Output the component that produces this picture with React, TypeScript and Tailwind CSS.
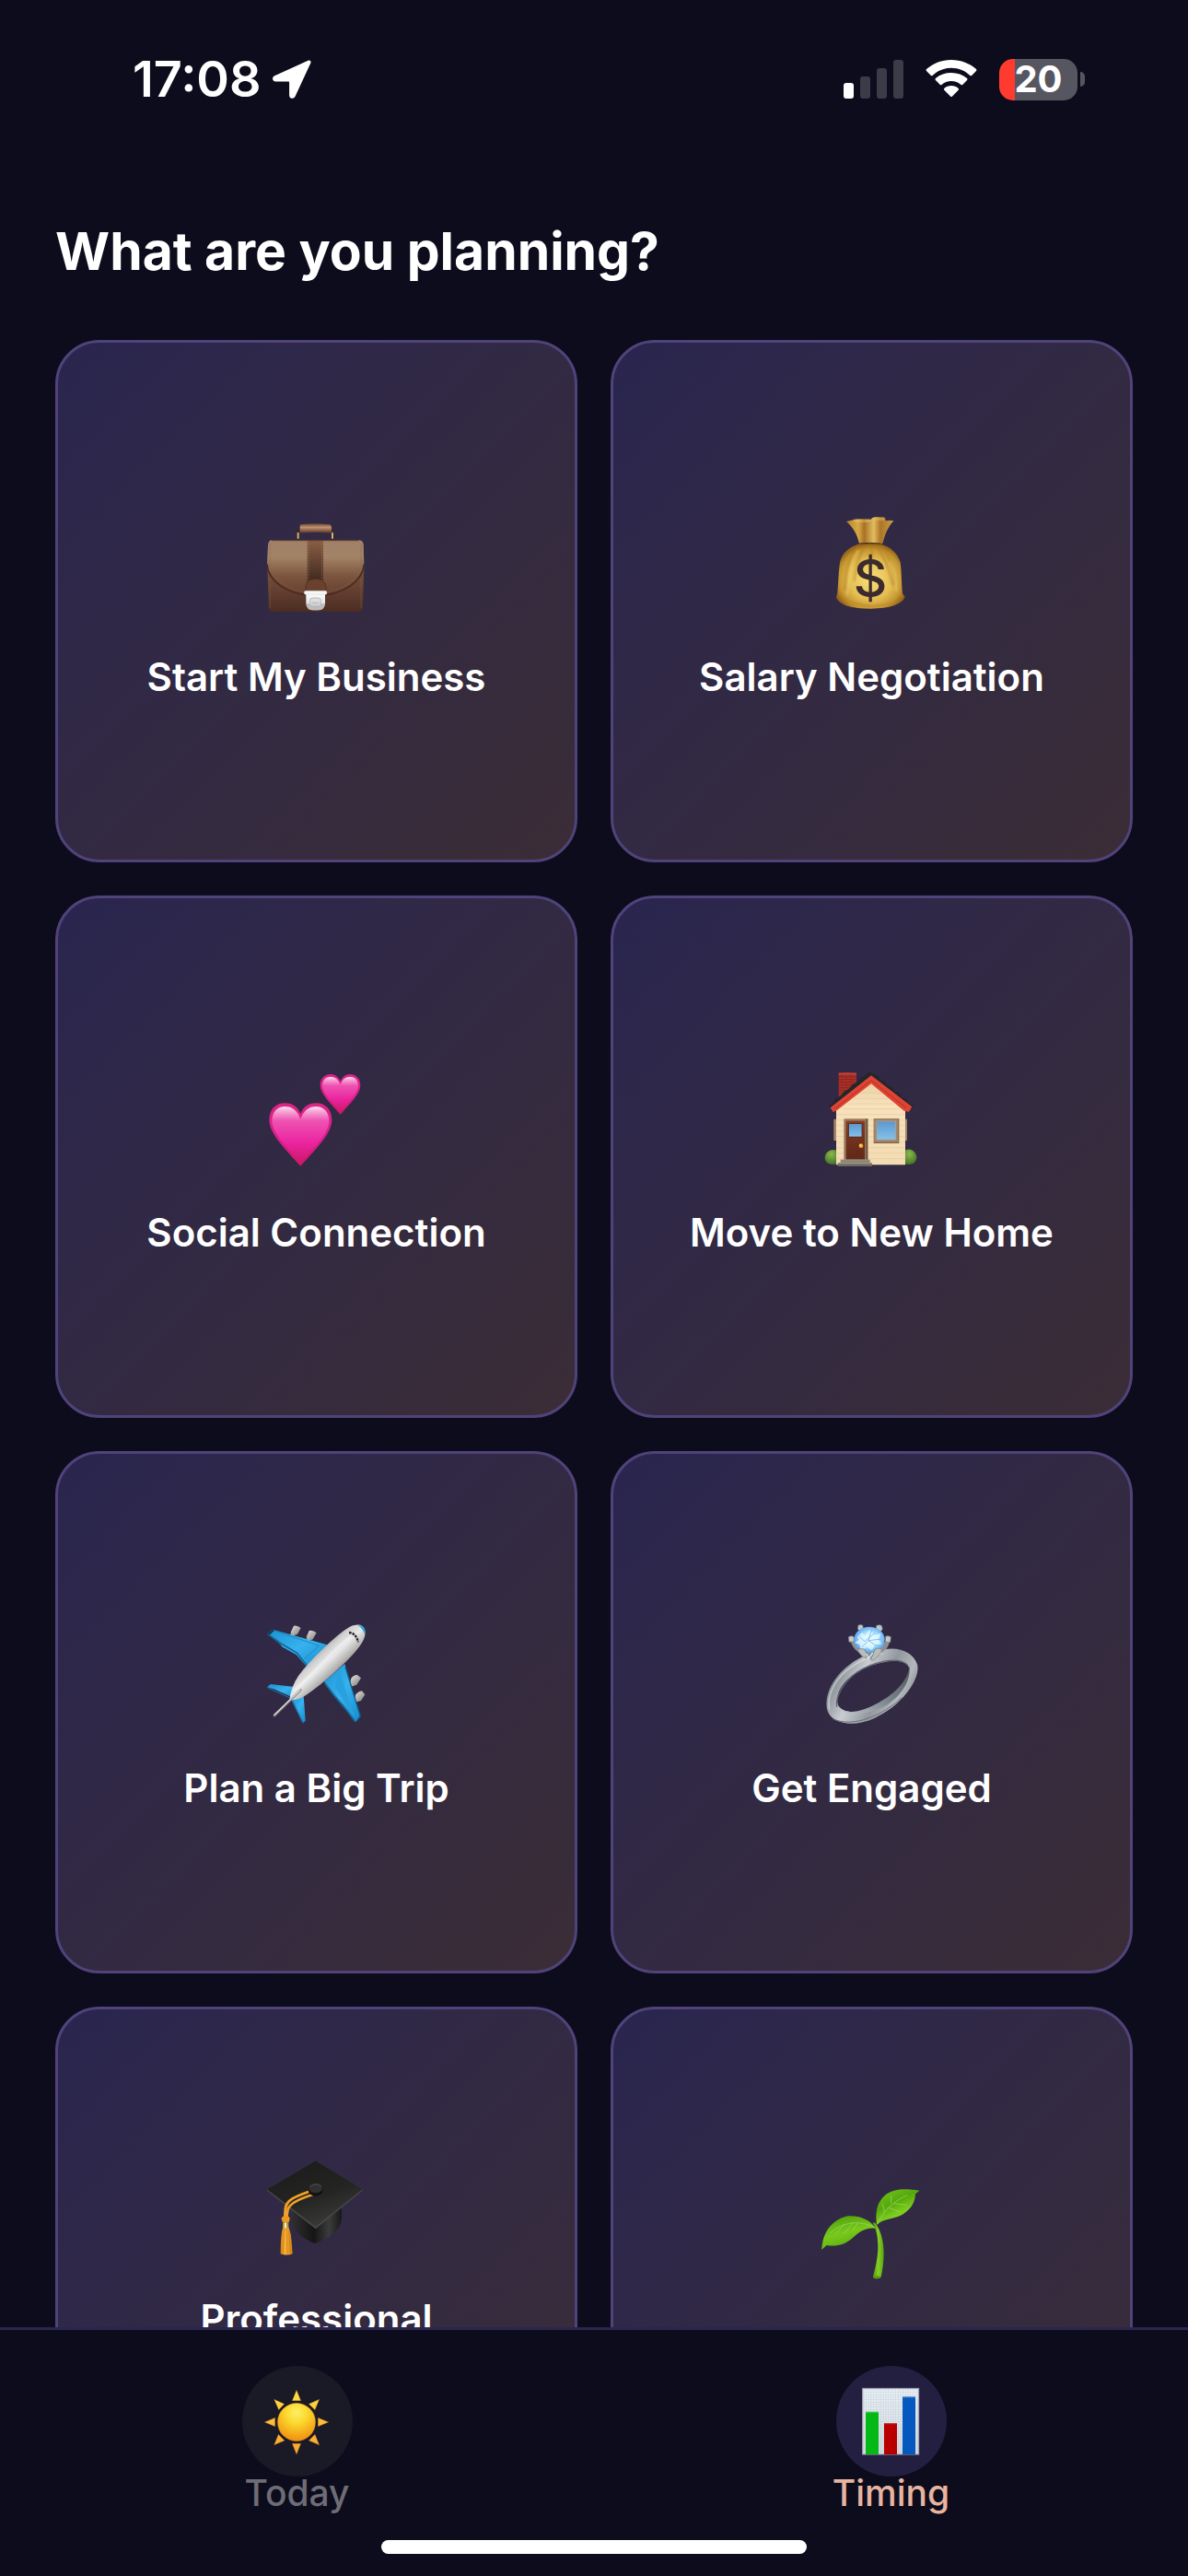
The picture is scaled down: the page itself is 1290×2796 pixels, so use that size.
import React, { useState } from 'react';

const BriefcaseIcon: React.FC = () => (
    <svg viewBox="34 4 432 432" className="w-full h-full" aria-hidden="true">
        <defs>
            <linearGradient id="caseBody" x1="0" y1="0" x2="0" y2="1">
                <stop offset="0" stopColor="#8a6750" />
                <stop offset="0.6" stopColor="#6b4636" />
                <stop offset="1" stopColor="#4c2c22" />
            </linearGradient>
            <linearGradient id="caseFlap" x1="0" y1="0" x2="0" y2="1">
                <stop offset="0" stopColor="#a08068" />
                <stop offset="0.3" stopColor="#a38366" />
                <stop offset="0.65" stopColor="#7b553e" />
                <stop offset="1" stopColor="#673f30" />
            </linearGradient>
            <linearGradient id="caseStrap" x1="0" y1="0" x2="0" y2="1">
                <stop offset="0" stopColor="#8a5f45" />
                <stop offset="1" stopColor="#37231a" />
            </linearGradient>
            <linearGradient id="caseHandle" x1="0" y1="0" x2="0" y2="1">
                <stop offset="0" stopColor="#6b432f" />
                <stop offset="0.4" stopColor="#c09373" />
                <stop offset="1" stopColor="#5a3525" />
            </linearGradient>
            <linearGradient id="caseLock" x1="0" y1="0" x2="0" y2="1">
                <stop offset="0" stopColor="#ffffff" />
                <stop offset="0.6" stopColor="#e2e2e4" />
                <stop offset="1" stopColor="#c4c4c8" />
            </linearGradient>
        </defs>
        <path d="M186 128c0-20 4-30 12-32M304 128c0-20-4-30-12-32" fill="none" stroke="#3a2617" strokeWidth="8" />
        <path d="M189 108v16M301 108v16" stroke="#cdb07c" strokeWidth="6" strokeLinecap="round" />
        <path d="M198 80q47-7 95 0q5 2 5 10v18q-53-6-103 0V88q0-7 3-8z" fill="url(#caseHandle)" />
        <path d="M104 131h283q15 0 15 18l2 72-4 128q-1 15-14 15H106q-12 0-13-15l-4-128 2-72q1-18 13-18z" fill="url(#caseBody)" />
        <path d="M104 131h283q15 0 15 18l2 60c-5 55-66 102-158 102S92 264 88 209l3-60q1-18 13-18z" fill="url(#caseFlap)" />
        <path d="M88 209c4 55 66 102 158 102s153-47 158-102" fill="none" stroke="#4b2b20" strokeWidth="5" />
        <path d="M98 142v70c8 48 64 90 148 90s140-42 148-90v-70" fill="none" stroke="#8a6449" strokeWidth="2" strokeDasharray="5 4" />
        <path d="M98 256v98M394 256v98" fill="none" stroke="#8a6449" strokeWidth="2" strokeDasharray="5 4" />
        <path d="M219 131h52v150h-52z" fill="url(#caseStrap)" />
        <path d="M223 133v130M267 133v130" stroke="#a27a5c" strokeWidth="2" strokeDasharray="5 4" />
        <path d="M214 298v-17q2-24 32-24t34 24v17z" fill="#6a412f" stroke="#4a2a1f" strokeWidth="2" />
        <path d="M104 132h283" stroke="#5c3626" strokeWidth="3" />
        <path d="M215 304h62v34q-2 21-22 21h-18q-20 0-22-21z" fill="url(#caseLock)" />
        <path d="M213 296h66q4 0 4 6t-4 6h-66q-4 0-4-6t4-6z" fill="#f6f6f7" stroke="#c5c5c8" strokeWidth="1" />
        <path d="M216 336q30 6 60 0l-2 8q-4 15-19 15h-18q-16 0-19-15z" fill="#bcbcc0" />
        <rect x="228" y="319" width="35" height="27" rx="8" fill="#dededf" stroke="#a5a5a8" strokeWidth="2" />
        <rect x="233" y="331" width="25" height="11" rx="4" fill="#c9c9cb" />
    </svg>
);

const MoneyBagIcon: React.FC = () => (
    <svg viewBox="14 4 432 432" className="w-full h-full" aria-hidden="true">
        <defs>
            <radialGradient id="bagBody" cx="0.5" cy="0.55" r="0.55">
                <stop offset="0" stopColor="#f8df79" />
                <stop offset="0.55" stopColor="#e5bf55" />
                <stop offset="0.85" stopColor="#c4952f" />
                <stop offset="1" stopColor="#94641a" />
            </radialGradient>
            <linearGradient id="bagNeck" x1="0" y1="0" x2="1" y2="0">
                <stop offset="0" stopColor="#b7812a" />
                <stop offset="0.25" stopColor="#d8aa45" />
                <stop offset="0.38" stopColor="#a87226" />
                <stop offset="0.58" stopColor="#e2bd60" />
                <stop offset="0.72" stopColor="#ad7627" />
                <stop offset="1" stopColor="#c99b45" />
            </linearGradient>
            <filter id="bagSoft"><feGaussianBlur stdDeviation="3" /></filter>
        </defs>
        <path d="M146 70q14-3 26-6 24-5 53 0 4-8 14-8 16-1 31 1l5 11q14-3 25 0-24 25-36 74h-76c-7-31-19-51-42-72z" fill="url(#bagNeck)" />
        <path d="M172 66q25 7 53 0M240 59q16 6 30 0" fill="none" stroke="#f0d079" strokeWidth="4" filter="url(#bagSoft)" />
        <path d="M188 143h68c34 10 56 29 66 60 4 33 4 79 7 101q3 6 8 11-6 18-36 29-29 10-75 10-48 0-78-9-24-8-34-25c-2-8 3-12 3-20 3-28 3-63 8-97 8-32 31-50 63-60z" fill="url(#bagBody)" />
        <g fill="none" stroke="#b07c25" strokeWidth="5" opacity="0.65" filter="url(#bagSoft)">
            <path d="M190 149c-32 28-49 70-48 145M207 149c-23 40-32 75-35 115M239 148c31 28 46 79 58 131M255 149c31 26 43 68 48 128M226 149c6 24 4 38 0 46M122 305c20 28 67 39 107 40s83-10 99-31" />
        </g>
        <path d="M148 310c10-55 7-100 37-147M310 297c-3-40-10-75-23-96" fill="none" stroke="#f6db7b" strokeWidth="6" opacity="0.5" filter="url(#bagSoft)" />
        <path d="M187 142q35-4 69 0" fill="none" stroke="#402816" strokeWidth="3" />
        <text x="224" y="317" textAnchor="middle" fontFamily="Inter, sans-serif" fontSize="170" fontWeight="500" fill="#3b2b2d">$</text>
    </svg>
);

const HeartsIcon: React.FC = () => (
    <svg viewBox="34 14 432 432" className="w-full h-full" aria-hidden="true">
        <defs>
            <linearGradient id="heartEdge" x1="0" y1="0" x2="0" y2="1">
                <stop offset="0" stopColor="#df2487" />
                <stop offset="0.6" stopColor="#d91e8a" />
                <stop offset="1" stopColor="#cf1767" />
            </linearGradient>
            <linearGradient id="heartFill" x1="0" y1="0" x2="0" y2="1">
                <stop offset="0" stopColor="#fce0f0" />
                <stop offset="0.1" stopColor="#f6a0d2" />
                <stop offset="0.26" stopColor="#ee52b1" />
                <stop offset="0.65" stopColor="#eb25a0" />
                <stop offset="1" stopColor="#d0186c" />
            </linearGradient>
        </defs>
        <path d="M197 199C186 174 168 165 146 165C115 165 95 187 95 221C96 263 143 311 197 370C251 311 298 263 299 221C299 187 279 165 248 165C226 165 208 174 197 199z" fill="url(#heartEdge)" />
        <path d="M197 217C188 190 170 176 147 176C121 176 104 194 104 223C106 262 148 305 197 356C246 305 289 262 290 223C290 194 273 176 247 176C224 176 206 190 197 217z" fill="url(#heartFill)" />
        <path d="M327 94C320 78 308 71 294 71C274 71 261 86 261 108C262 136 292 163 327 202C361 163 391 136 392 108C392 86 379 71 359 71C345 71 334 78 327 94z" fill="url(#heartEdge)" />
        <path d="M327 105C320 87 309 79 295 79C278 79 268 91 268 109C269 133 296 158 327 191C357 158 384 133 385 109C385 91 375 79 358 79C344 79 333 87 327 105z" fill="url(#heartFill)" />
    </svg>
);

const HouseIcon: React.FC = () => (
    <svg viewBox="14 14 432 432" className="w-full h-full" aria-hidden="true">
        <defs>
            <linearGradient id="houseGlass" x1="0" y1="0" x2="0" y2="1">
                <stop offset="0" stopColor="#5a99cf" />
                <stop offset="1" stopColor="#84c1ea" />
            </linearGradient>
            <linearGradient id="houseDoor" x1="0" y1="0" x2="0" y2="1">
                <stop offset="0" stopColor="#853c22" />
                <stop offset="1" stopColor="#5f2717" />
            </linearGradient>
            <linearGradient id="houseWall" x1="0" y1="0" x2="0" y2="1">
                <stop offset="0" stopColor="#e8cfa6" />
                <stop offset="0.3" stopColor="#f8e2bb" />
                <stop offset="1" stopColor="#f3dbb3" />
            </linearGradient>
            <radialGradient id="houseBush" cx="0.45" cy="0.3" r="0.75">
                <stop offset="0" stopColor="#8ab94a" />
                <stop offset="1" stopColor="#3d6e25" />
            </radialGradient>
        </defs>
        <path d="M76 343q2-20 20-25 14-3 26 5v39q-18 6-34 0-11-6-12-19z" fill="url(#houseBush)" />
        <path d="M332 322q15-11 30-3 14 10 13 25-2 15-15 19-14 5-28-1z" fill="url(#houseBush)" />
        <path d="M105 217h10v70h-10zM335 217h9v70h-9z" fill="#a48569" />
        <path d="M121 67q28-4 58 0v50l-58 34z" fill="#a82f27" />
        <path d="M121 67h58v5h-58z" fill="#c4463a" />
        <path d="M121 79h58M121 88h58M121 97h58M121 106h58M121 115h50M121 124h40M121 133h26M132 71v8M146 79v9M160 71v8M132 88v9M160 88v9M146 97v9" stroke="#7d211d" strokeWidth="1.5" />
        <path d="M226 92l112 92v182H113V184z" fill="url(#houseWall)" />
        <path d="M190 132h72M172 150h108M154 167h144M132 184h188M114 202h223M114 220h223M114 238h223M114 256h223M114 274h223M114 292h223M114 310h223M114 328h223M114 346h223" stroke="#e2caa0" strokeWidth="2" />
        <path d="M226 66l24 11 6 11 16 7 7 12 17 7 7 12 17 7 6 13 17 7 7 12 15 9-9 9L227 82 98 183l-9-9 14-12 9-13 16-8 10-14 17-9 10-13 18-9 9-13 16-8 7-11z" fill="#24262c" />
        <path d="M227 75l133 102-10 16-16-3L227 102 116 188l-13 6-9-14z" fill="#df4433" />
        <path d="M227 91l115 90M227 91L107 184" stroke="#a82720" strokeWidth="4" fill="none" opacity="0.5" />
        <path d="M138 216h78v134h-78z" fill="#9a7a5e" />
        <path d="M209 216h7v134h-7z" fill="#745944" />
        <rect x="145" y="223" width="61" height="126" fill="url(#houseDoor)" />
        <path d="M149 284h53v60h-53zM149 292h53" fill="none" stroke="#713521" strokeWidth="2" />
        <rect x="154" y="232" width="43" height="43" fill="url(#houseGlass)" stroke="#4d201a" strokeWidth="2" />
        <circle cx="194" cy="304" r="7" fill="#e9a72f" />
        <circle cx="192" cy="302" r="3" fill="#fff0a5" />
        <path d="M127 349h96v11h-96z" fill="#8b8576" />
        <path d="M118 360h112v10H118z" fill="#767268" />
        <path d="M127 350h96M119 360h110" stroke="#aaa391" strokeWidth="2" />
        <rect x="235" y="215" width="83" height="81" fill="#80664f" />
        <rect x="236" y="216" width="79" height="76" fill="#a38468" />
        <rect x="245" y="224" width="62" height="60" fill="url(#houseGlass)" stroke="#b9a58c" strokeWidth="2" />
    </svg>
);

const PlaneIcon: React.FC = () => (
    <svg viewBox="34 22 432 432" className="w-full h-full" aria-hidden="true">
        <defs>
            <linearGradient id="planeBody" x1="0.3" y1="0.3" x2="0.68" y2="0.7">
                <stop offset="0" stopColor="#8a8785" />
                <stop offset="0.3" stopColor="#d2d2d2" />
                <stop offset="0.5" stopColor="#e8e8e8" />
                <stop offset="0.75" stopColor="#b3b2b1" />
                <stop offset="1" stopColor="#5e5a58" />
            </linearGradient>
            <linearGradient id="planeWing" x1="0" y1="0" x2="1" y2="1">
                <stop offset="0" stopColor="#1b91d0" />
                <stop offset="0.5" stopColor="#37b2ee" />
                <stop offset="1" stopColor="#168bcb" />
            </linearGradient>
            <linearGradient id="planeEngine" x1="0" y1="0" x2="1" y2="1">
                <stop offset="0" stopColor="#ededeb" />
                <stop offset="1" stopColor="#777370" />
            </linearGradient>
        </defs>
        <path d="M160 97l15-31q12-3 23 7l-11 20-24 9z" fill="url(#planeEngine)" />
        <path d="M211 114l14-32q14-3 24 7l-12 21-22 8z" fill="url(#planeEngine)" />
        <path d="M355 262l7-25q9-12 20-11l12 10-14 22-20 7z" fill="url(#planeEngine)" />
        <path d="M370 312l7-23q10-11 20-11l10 12-13 20-20 5z" fill="url(#planeEngine)" />
        <path d="M160 97l5-10M211 114l6-10M355 262l3-10M370 312l4-10" stroke="#3d302e" strokeWidth="4" />
        <path d="M88 91l19-13 177 50-65 73-36-41-47-26-3-6z" fill="url(#planeWing)" />
        <path d="M90 93l46 32 50 30 34 43" fill="none" stroke="#0f6797" strokeWidth="5" />
        <path d="M107 80l150 51-47 42" fill="none" stroke="#1478ae" strokeWidth="2" />
        <path d="M88 91l19-13 5 3-16 15z" fill="#123a54" />
        <path d="M341 190l50 170-14 19-35-48-34-40-34-43z" fill="url(#planeWing)" />
        <path d="M343 200l49 160-11 15" fill="none" stroke="#0e5c89" strokeWidth="4" />
        <path d="M276 252l34 45 30 35 36 46" fill="none" stroke="#136c9f" strokeWidth="5" />
        <path d="M322 210l52 155-64-100" fill="#29a0df" />
        <path d="M88 266l11-10 72 8 11 40-72-32z" fill="url(#planeWing)" />
        <path d="M166 305l41-12 6 82-9 8z" fill="url(#planeWing)" />
        <path d="M89 267l80 37M171 310l34 70" stroke="#1273a8" strokeWidth="3" />
        <path d="M398 67q17 16 4 45-17 36-91 103-47 43-92 74-32 22-58 18 5-42 29-78 29-40 85-93 70-66 96-72 18-4 27 3z" fill="url(#planeBody)" />
        <path d="M174 278q51-45 86-83 74-78 103-94" fill="none" stroke="#ffffff" strokeWidth="10" opacity="0.35" />
        <path d="M384 65q17-1 22 10 3 9-1 17-5-17-21-27z" fill="#2aa5e3" />
        <path d="M355 88q22 1 30 31" fill="none" stroke="#25252a" strokeWidth="7" strokeDasharray="8 3" />
        <path d="M112 358l85-83" stroke="#858282" strokeWidth="8" strokeLinecap="round" />
        <path d="M112 356l84-81" stroke="#dadada" strokeWidth="4" strokeLinecap="round" />
    </svg>
);

const RingIcon: React.FC = () => (
    <svg viewBox="14 22 432 432" className="w-full h-full" aria-hidden="true">
        <defs>
            <linearGradient id="ringBand" x1="0" y1="0.3" x2="1" y2="0.7">
                <stop offset="0" stopColor="#b3b7bc" />
                <stop offset="0.12" stopColor="#898f96" />
                <stop offset="0.35" stopColor="#c9cdd2" />
                <stop offset="0.6" stopColor="#93989e" />
                <stop offset="0.8" stopColor="#b4b8bd" />
                <stop offset="1" stopColor="#74797f" />
            </linearGradient>
            <linearGradient id="ringInner" x1="0" y1="1" x2="1" y2="0">
                <stop offset="0" stopColor="#bfc5ca" />
                <stop offset="0.5" stopColor="#79828a" />
                <stop offset="1" stopColor="#50575e" />
            </linearGradient>
            <radialGradient id="ringGem" cx="0.52" cy="0.48" r="0.55">
                <stop offset="0" stopColor="#f4feff" />
                <stop offset="0.5" stopColor="#b0e3fc" />
                <stop offset="1" stopColor="#4c9aed" />
            </radialGradient>
        </defs>
        <path d="M272 142C323 134 366 154 378 194C386 248 320 329 239 366C174 396 104 388 86 346C70 300 98 235 157 192C188 169 227 149 272 142zM294 181C235 185 170 215 137 255C117 281 111 306 121 328C143 356 213 353 264 324C316 291 350 240 351 204C346 186 326 179 294 181z" fill="url(#ringBand)" fillRule="evenodd" />
        <path d="M121 328C136 365 214 356 273 327C329 294 361 235 350 194C353 235 311 284 253 315C205 343 142 361 121 328z" fill="url(#ringInner)" />
        <path d="M91 339C81 294 109 235 165 198C190 180 226 164 264 155" fill="none" stroke="#eef1f4" strokeWidth="5" opacity="0.5" />
        <path d="M115 330C109 293 142 246 180 218C230 183 316 163 345 193" fill="none" stroke="#5d646b" strokeWidth="4" />
        <path d="M103 369C166 400 268 357 327 299" fill="none" stroke="#666d75" strokeWidth="3" />
        <path d="M158 112q8 28 28 40l43 24 39-27q18-15 20-38l-14 3q-13 27-47 35-40-5-55-37z" fill="#8b9094" />
        <path d="M183 76l2-12q8-4 15 1l1 14-10 7zM243 76l1-11q9-4 17 0l3 12-9 11z" fill="#c3c6c8" stroke="#6d7377" strokeWidth="2" />
        <path d="M153 102q10-6 18 0v15l-16 2zM274 100q9-3 17 2l-2 18-16-2z" fill="#c6c8c9" stroke="#767b7e" strokeWidth="2" />
        <ellipse cx="221" cy="111" rx="50" ry="42" fill="url(#ringGem)" />
        <path d="M181 103l16-15 10 10 15-19 17 18 20-7-9 21 12 14-21 2-12 18-17-9-18 11-5-20-16-6 15-10z" fill="#e5fbff" opacity="0.75" />
        <path d="M187 100l19 17 33-28M198 135l20-21 27 18M228 79l-10 35 42-5" fill="none" stroke="#72aef5" strokeWidth="3" opacity="0.8" />
        <path d="M182 145q11-8 22-3l9 16-3 14q-17-6-28-27zM239 142q12-6 22 0 2 11-9 20l-18 17-9-3q9-16 14-34z" fill="#b9bcbd" stroke="#74797c" strokeWidth="2" />
        <path d="M211 157l9 14 12-17" fill="none" stroke="#dbe9f0" strokeWidth="4" />
    </svg>
);

const GraduationCapIcon: React.FC = () => (
    <svg viewBox="34 10 432 432" className="w-full h-full" aria-hidden="true">
        <defs>
            <linearGradient id="capTop" x1="0.2" y1="0" x2="0.7" y2="1">
                <stop offset="0" stopColor="#1b1b1b" />
                <stop offset="0.55" stopColor="#242423" />
                <stop offset="1" stopColor="#3c3c3b" />
            </linearGradient>
            <linearGradient id="capBase" x1="0" y1="0" x2="1" y2="0">
                <stop offset="0" stopColor="#303030" />
                <stop offset="0.45" stopColor="#151515" />
                <stop offset="0.75" stopColor="#3c3c3c" />
                <stop offset="1" stopColor="#181818" />
            </linearGradient>
            <linearGradient id="capTassel" x1="0" y1="0" x2="1" y2="0">
                <stop offset="0" stopColor="#d98313" />
                <stop offset="0.4" stopColor="#f8b238" />
                <stop offset="1" stopColor="#d47f12" />
            </linearGradient>
        </defs>
        <path d="M166 220v35q1 32 23 50 23 21 55 32 31-9 57-30 26-20 30-49v-35z" fill="url(#capBase)" />
        <path d="M246 68l154 92-1 5-153 125L88 166v-5z" fill="#474646" />
        <path d="M246 68l154 92-154 122L88 161z" fill="url(#capTop)" />
        <path d="M232 166C184 180 160 194 154 211q-5 13-6 39" fill="none" stroke="#a85f0a" strokeWidth="7" />
        <path d="M225 168C175 186 155 196 149 216q-3 12-3 37M240 177C192 191 163 205 156 226l-4 25" fill="none" stroke="#f0a12a" strokeWidth="8" />
        <ellipse cx="246" cy="163" rx="24" ry="20" fill="#131313" />
        <ellipse cx="246" cy="157" rx="22" ry="16" fill="#303030" />
        <path d="M228 153q17-16 35-2" fill="none" stroke="#505050" strokeWidth="3" />
        <path d="M135 257q1-9 13-10 13 0 14 10l-3 12h-20z" fill="#eb9a20" />
        <path d="M140 284h18q9 21 10 48l3 39q-18 7-39 0 0-65 8-87z" fill="url(#capTassel)" />
        <path d="M144 289l-5 81M152 289l2 83M159 298l5 71" stroke="#c8780f" strokeWidth="2" />
        <path d="M139 269h19v17h-19z" fill="#b49a4d" />
        <path d="M145 269h6v17h-6z" fill="#fff1b5" />
    </svg>
);

const SeedlingIcon: React.FC = () => (
    <svg viewBox="14 32 432 432" className="w-full h-full" aria-hidden="true">
        <defs>
            <linearGradient id="leafLeft" x1="0.2" y1="0" x2="0.6" y2="1">
                <stop offset="0" stopColor="#4f9d0d" />
                <stop offset="0.5" stopColor="#78c81c" />
                <stop offset="1" stopColor="#58a90f" />
            </linearGradient>
            <linearGradient id="leafRight" x1="0" y1="0" x2="0.6" y2="1">
                <stop offset="0" stopColor="#74c71b" />
                <stop offset="0.45" stopColor="#56a90d" />
                <stop offset="0.75" stopColor="#82d021" />
                <stop offset="1" stopColor="#519f0c" />
            </linearGradient>
            <linearGradient id="leafStem" x1="0" y1="0" x2="1" y2="0">
                <stop offset="0" stopColor="#4d960d" />
                <stop offset="0.5" stopColor="#84d024" />
                <stop offset="1" stopColor="#58a30f" />
            </linearGradient>
        </defs>
        <path d="M241 229C222 199 185 185 144 190C102 201 75 236 68 277L65 299L82 284C112 289 140 283 163 263C187 241 207 225 241 229z" fill="url(#leafLeft)" />
        <path d="M245 218C240 175 245 145 272 121C301 98 341 99 384 106L371 117C370 143 358 166 329 184C300 200 264 196 245 218z" fill="url(#leafRight)" />
        <path d="M239 227C190 201 137 207 92 245M168 210l-31 38M141 214l-27 30M184 211l-18 26" fill="none" stroke="#a2dd67" strokeWidth="3" opacity="0.6" />
        <path d="M247 215C264 178 294 142 345 121M300 148l42 5M285 163l38 13M291 148l2-27M270 176l-6-28" fill="none" stroke="#a5df69" strokeWidth="3" opacity="0.6" />
        <path d="M232 211q8-4 14 9c14 24 22 53 22 91 0 29-4 54-9 76q-3 6-13 6-13 0-13-8c11-42 17-73 16-102-1-25-3-44-17-72z" fill="url(#leafStem)" />
        <ellipse cx="246" cy="388" rx="11" ry="4" fill="#5b981e" />
    </svg>
);

const SunIcon: React.FC = () => (
    <svg viewBox="69 54 360 360" className="w-full h-full" aria-hidden="true">
        <defs>
            <radialGradient id="sunDisc" cx="0.5" cy="0.25" r="0.8">
                <stop offset="0" stopColor="#fdee68" />
                <stop offset="0.35" stopColor="#fbd92e" />
                <stop offset="0.75" stopColor="#f3a518" />
                <stop offset="1" stopColor="#ed8a0d" />
            </radialGradient>
            <linearGradient id="sunRays" gradientUnits="userSpaceOnUse" x1="0" y1="134" x2="0" y2="341">
                <stop offset="0" stopColor="#fbe444" />
                <stop offset="0.5" stopColor="#fbbd3a" />
                <stop offset="1" stopColor="#f8a62f" />
            </linearGradient>
        </defs>
        <path d="M246 133l14 34h-28zM246 342l14-35h-28zM142 237l34-14v28zM350 237l-34-14v28zM173 163l33 15-18 19zM320 163l-14 34-20-19zM173 311l14-34 20 20zM320 311l-34-14 20-20z" fill="url(#sunRays)" stroke="#b86a14" strokeWidth="1" />
        <circle cx="246" cy="237" r="62" fill="url(#sunDisc)" stroke="#c96c12" strokeWidth="1" />
    </svg>
);

const ChartIcon: React.FC = () => (
    <svg viewBox="114 54 360 360" className="w-full h-full" aria-hidden="true">
        <defs>
            <pattern id="chartGrid" width="8" height="8" patternUnits="userSpaceOnUse">
                <path d="M0 4h8M4 0v8" stroke="#b9d0e6" strokeWidth="2" />
            </pattern>
            <linearGradient id="chartPaper" x1="0" y1="0" x2="0" y2="1">
                <stop offset="0" stopColor="#f3f3f3" />
                <stop offset="1" stopColor="#d9d9d8" />
            </linearGradient>
        </defs>
        <rect x="200" y="127" width="183" height="215" fill="url(#chartPaper)" />
        <rect x="200" y="127" width="183" height="215" fill="url(#chartGrid)" opacity="0.8" />
        <rect x="200" y="127" width="183" height="215" fill="none" stroke="#a09fae" strokeWidth="3" />
        <rect x="210" y="203" width="42" height="139" fill="#04b915" />
        <rect x="270" y="240" width="42" height="102" fill="#b80000" />
        <rect x="330" y="154" width="42" height="188" fill="#0558bd" />
        <path d="M210 205h42M270 242h42M330 156h42" stroke="#ffffff" strokeWidth="3" opacity="0.25" />
    </svg>
);

const StatusBar: React.FC = () => (
    <header className="flex items-center justify-between pl-36 pr-28 pt-[62px] pb-9">
        <div className="flex items-center gap-3">
            <time className="text-[54px] leading-12 font-semibold">17:08</time>
            <svg viewBox="0 0 42 42" className="w-[42px] h-[42px]" fill="currentColor" aria-hidden="true">
                <path d="M38.5.7L2.2 17.2c-3.6 1.7-2.4 6.4 1.2 6.4h13.5c.8 0 1.2.4 1.2 1.2v13.6c0 3.8 4.9 4.8 6.5 1.2L41.3 3.500c.9-2.100-.8-3.700-2.800-2.800z" />
            </svg>
        </div>
        <div className="flex items-center gap-[23px]">
            <svg viewBox="0 0 65 42" className="w-[65px] h-[42px]" fill="#3c3b48" aria-label="Signal">
                <rect x="0" y="25" width="11" height="17" rx="3" fill="#fff" />
                <rect x="18" y="18" width="11" height="24" rx="3" />
                <rect x="36" y="9" width="11" height="33" rx="3" />
                <rect x="54" y="0" width="11" height="42" rx="3" />
            </svg>
            <svg viewBox="0 0 58 42" className="w-[58px] h-[42px]" fill="currentColor" aria-label="Wi-Fi">
                <path d="M29 8.700c7.900 0 15.100 3.100 20.400 8.200.5.500 1.200.5 1.700 0l4.900-5c.5-.5.5-1.300 0-1.800C49 3.800 39.500 0 29 0S9 3.800 2 10.100c-.5.5-.5 1.300 0 1.800l4.900 5c.5.500 1.200.500 1.700 0C13.900 11.800 21.100 8.700 29 8.700z" />
                <path d="M29 22.900c4 0 7.700 1.500 10.500 4 .5.500 1.200.500 1.700 0l4.900-5c.5-.500.5-1.300 0-1.800C41.500 16 35.500 14 29 14s-12.500 2-17.100 6.100c-.5.500-.5 1.300 0 1.800l4.900 5c.5.500 1.200.500 1.700 0 2.800-2.500 6.500-4 10.500-4z" />
                <path d="M36.700 32.700c.5-.5.5-1.300 0-1.800-4.300-3.800-11.100-3.800-15.400 0-.5.500-.5 1.300 0 1.800l6.900 7c.5.500 1.200.500 1.600 0z" />
            </svg>
            <div className="flex items-center gap-[3px]">
                <div className="w-[85px] h-[45px] rounded-[15px] bg-[linear-gradient(to_right,#ff3b30_20%,#565661_20%)] flex items-center justify-center">
                    <span className="text-[40px] leading-10 font-bold">20</span>
                </div>
                <div className="w-[5px] h-4 rounded-r-full bg-[#565661]" />
            </div>
        </div>
    </header>
);

const PlanCard: React.FC<{ label: string, icon: React.ReactNode }> = ({ label, icon }) => (
    <button className="aspect-square rounded-[48px] border-3 border-[#50437a] bg-linear-135 from-[#2a254f] to-[#3b2d36] bg-origin-border flex flex-col items-center justify-center gap-5 px-12">
        <span className="w-36 h-36">{icon}</span>
        <span className="text-[42px] leading-[54px] font-semibold">{label}</span>
    </button>
);

const TabButton: React.FC<{ label: string, icon: React.ReactNode, active: boolean, onClick: () => void }> = ({ label, icon, active, onClick }) => (
    <button onClick={onClick} className="flex-1 flex flex-col items-center">
        <span className={`w-30 h-30 rounded-full ${active ? 'bg-[#231f40]' : 'bg-[#1a1926]'}`}>{icon}</span>
        <span className={`text-[39px] leading-9 font-medium ${active ? 'text-[#e8b4a0]' : 'text-[#6e6d76]'}`}>{label}</span>
    </button>
);

const App: React.FC = () => {
    const [activeTab, setActiveTab] = useState<'today' | 'timing'>('timing');
    const plans = [
        { label: 'Start My Business', icon: <BriefcaseIcon /> },
        { label: 'Salary Negotiation', icon: <MoneyBagIcon /> },
        { label: 'Social Connection', icon: <HeartsIcon /> },
        { label: 'Move to New Home', icon: <HouseIcon /> },
        { label: 'Plan a Big Trip', icon: <PlaneIcon /> },
        { label: 'Get Engaged', icon: <RingIcon /> },
        { label: 'Professional Development', icon: <GraduationCapIcon /> },
        { label: 'Personal Growth', icon: <SeedlingIcon /> },
    ];

    return (
        <div className="h-screen flex flex-col overflow-hidden bg-[#0d0c1d] text-white font-['Inter',sans-serif]">
            <StatusBar />

            <main className="flex-1 min-h-0 overflow-y-auto [scrollbar-width:none] px-15 pt-[91px]">
                <h1 className="text-[57px] leading-18 font-bold">What are you planning?</h1>
                <div className="grid grid-cols-2 gap-9 mt-15 pb-15">
                    {plans.map((plan) => (
                        <PlanCard key={plan.label} {...plan} />
                    ))}
                </div>
            </main>

            <footer className="border-t-3 border-[#2a254c] pt-[39px] pb-6">
                <nav className="flex">
                    <TabButton label="Today" icon={<SunIcon />} active={activeTab === 'today'} onClick={() => setActiveTab('today')} />
                    <TabButton label="Timing" icon={<ChartIcon />} active={activeTab === 'timing'} onClick={() => setActiveTab('timing')} />
                </nav>
                <div className="mx-auto mt-[33px] w-[462px] h-[15px] rounded-full bg-white" />
            </footer>
        </div>
    );
};

export default App;
